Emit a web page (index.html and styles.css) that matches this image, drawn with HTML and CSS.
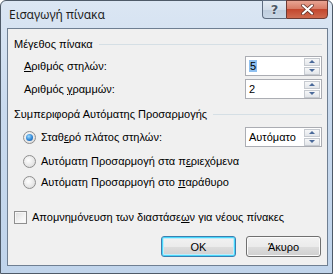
FILE: index.html
```html
<!DOCTYPE html>
<html lang="el">

<head>
    <meta charset="UTF-8">
    <title>Εισαγωγή πίνακα</title>
    <link rel="stylesheet" href="styles.css">
</head>

<body>
    <div class="window">
        <!-- Title bar -->
        <div class="titlebar">
            <span class="title">Εισαγωγή πίνακα</span>
            <div class="caption-btns">
                <div class="cap-btn help">?</div>
                <div class="cap-btn close">
                    <svg width="13" height="11" viewBox="0 0 13 11">
                        <path d="M2 1.5 L11 9.5 M11 1.5 L2 9.5" stroke="#5a2a22" stroke-width="3.6" stroke-linecap="round" />
                        <path d="M2 1.5 L11 9.5 M11 1.5 L2 9.5" stroke="#fff" stroke-width="2.2" stroke-linecap="round" />
                    </svg>
                </div>
            </div>
        </div>

        <!-- Dialog body -->
        <div class="client">
            <div class="group-head first">
                <span>Μέγεθος πίνακα</span>
                <span class="rule"></span>
            </div>

            <div class="row field first-field">
                <label class="field-label"><u>Α</u>ριθμός στηλών:</label>
                <div class="spin">
                    <span class="spin-value"><span class="selected">5</span></span>
                    <div class="spin-btns">
                        <div class="spin-btn"><span class="arrow up"></span></div>
                        <div class="spin-btn"><span class="arrow down"></span></div>
                    </div>
                </div>
            </div>

            <div class="row field second-field">
                <label class="field-label">Αριθμός <u>γ</u>ραμμών:</label>
                <div class="spin">
                    <span class="spin-value">2</span>
                    <div class="spin-btns">
                        <div class="spin-btn"><span class="arrow up"></span></div>
                        <div class="spin-btn"><span class="arrow down"></span></div>
                    </div>
                </div>
            </div>

            <div class="group-head second">
                <span>Συμπεριφορά Αυτόματης Προσαρμογής</span>
                <span class="rule"></span>
            </div>

            <div class="row field radio-first">
                <label class="option"><span class="radio checked"></span><span>Σταθ<u>ε</u>ρό πλάτος στηλών:</span></label>
                <div class="spin">
                    <span class="spin-value">Αυτόματο</span>
                    <div class="spin-btns">
                        <div class="spin-btn"><span class="arrow up"></span></div>
                        <div class="spin-btn"><span class="arrow down"></span></div>
                    </div>
                </div>
            </div>

            <div class="row option-row radio-second">
                <label class="option"><span class="radio"></span><span>Αυτόματη Προσαρμογή στα π<u>ε</u>ριεχόμενα</span></label>
            </div>

            <div class="row option-row radio-third">
                <label class="option"><span class="radio"></span><span>Αυτόματη Προσαρμογή στο <u>π</u>αράθυρο</span></label>
            </div>

            <div class="row check-row">
                <label class="option"><span class="checkbox"></span><span>Απομνημόνευση των διαστάσε<u>ω</u>ν για νέους πίνακες</span></label>
            </div>

            <div class="button-row">
                <button class="btn default">OK</button>
                <button class="btn">Άκυρο</button>
            </div>
        </div>
    </div>
</body>

</html>
```

FILE: styles.css
```css
* {
    margin: 0;
    padding: 0;
    box-sizing: border-box;
}

body {
    font-family: 'Liberation Sans', 'DejaVu Sans', sans-serif;
    font-size: 11px;
    color: #000;
    background-color: #fff;
}

.window {
    width: 333px;
    height: 274px;
    border: 1px solid #4e5a68;
    border-radius: 6px 6px 0 0;
    background: linear-gradient(to bottom, #dbe6f3 0%, #c9daee 40%, #c0d4eb 100%);
    padding: 0 4px 7px 6px;
    display: flex;
    flex-direction: column;
}

.titlebar {
    height: 27px;
    display: flex;
    align-items: flex-start;
    justify-content: space-between;
}

.title {
    font-family: 'Noto Sans', 'DejaVu Sans', sans-serif;
    font-size: 12px;
    color: #1e1e1e;
    margin: 6px 0 0 2px;
    line-height: 16px;
}

.caption-btns {
    display: flex;
    margin-top: -1px;
}

.cap-btn {
    height: 19px;
    border: 1px solid #5f6d80;
    display: flex;
    align-items: center;
    justify-content: center;
}

.help {
    width: 24px;
    border-radius: 0 0 0 4px;
    border-right: none;
    background: linear-gradient(to bottom, #e4ebf3 0%, #d3dde9 50%, #bfcddd 51%, #c9d7e6 100%);
    color: #4d5866;
    font-family: 'DejaVu Sans', sans-serif;
    font-weight: bold;
    font-size: 13px;
    text-shadow: 0 0 2px #fff;
}

.close {
    width: 42px;
    border-radius: 0 0 4px 0;
    background: linear-gradient(to bottom, #e8a493 0%, #d87c66 45%, #c3472e 50%, #cf6a4f 100%);
    border-color: #6c3a33;
}

.client {
    flex: 1;
    background-color: #f0f0f0;
    border: 1px solid #6f7f92;
    padding: 0 5px 0 6px;
    display: flex;
    flex-direction: column;
}

.group-head {
    display: flex;
    align-items: center;
    height: 14px;
    color: #000;
}

.group-head.first {
    margin-top: 8px;
}

.group-head.second {
    margin-top: 8px;
}

.rule {
    flex: 1;
    height: 1px;
    background-color: #d5dfe5;
    margin-left: 6px;
}

.row {
    display: flex;
    align-items: center;
}

.field {
    height: 20px;
    justify-content: space-between;
}

.first-field {
    margin-top: 5px;
}

.second-field {
    margin-top: 3px;
}

.field-label {
    margin-left: 10px;
}

.spin {
    width: 77px;
    height: 20px;
    border: 1px solid #abadb3;
    background-color: #fff;
    display: flex;
    align-items: center;
    justify-content: space-between;
    padding: 0 1px 0 3px;
}

.spin-value {
    line-height: 14px;
}

.selected {
    background-color: #8fc0f0;
    padding: 0 1px;
}

.spin-btns {
    display: flex;
    flex-direction: column;
    gap: 1px;
}

.spin-btn {
    width: 16px;
    height: 8px;
    border: 1px solid #c6cad0;
    background: linear-gradient(to bottom, #f6f7f8, #e3e6ea);
    display: flex;
    align-items: center;
    justify-content: center;
}

.arrow {
    width: 0;
    height: 0;
    border-left: 3px solid transparent;
    border-right: 3px solid transparent;
}

.arrow.up {
    border-bottom: 3px solid #4b6a9a;
}

.arrow.down {
    border-top: 3px solid #4b6a9a;
}

.radio-first {
    margin-top: 6px;
}

.option-row {
    height: 18px;
}

.radio-second {
    margin-top: 5px;
}

.radio-third {
    margin-top: 3px;
}

.option {
    display: flex;
    align-items: center;
}

.radio {
    width: 13px;
    height: 13px;
    border-radius: 50%;
    border: 1px solid #8f8f8f;
    background: radial-gradient(circle at 40% 40%, #ffffff 0%, #e6e6e6 60%, #cfcfcf 100%);
    margin: 0 5px 0 9px;
    display: flex;
    align-items: center;
    justify-content: center;
}

.radio.checked::after {
    content: "";
    width: 7px;
    height: 7px;
    border-radius: 50%;
    background: radial-gradient(circle at 40% 35%, #9fdcff 0%, #2f86d6 55%, #1a4f8f 100%);
}

.check-row {
    height: 18px;
    margin-top: 17px;
}

.checkbox {
    width: 13px;
    height: 13px;
    border: 1px solid #8f8f8f;
    background: linear-gradient(135deg, #dcdcdc 0%, #f4f4f4 60%, #ffffff 100%);
    box-shadow: inset 0 0 0 1px #f6f6f6;
    margin: 0 5px 0 0;
}

.button-row {
    display: flex;
    justify-content: flex-end;
    gap: 10px;
    margin-top: 10px;
    padding-right: 1px;
}

.btn {
    width: 75px;
    height: 21px;
    font-family: 'Liberation Sans', 'DejaVu Sans', sans-serif;
    font-size: 11px;
    color: #000;
    border: 1px solid #707070;
    border-radius: 3px;
    background: linear-gradient(to bottom, #f2f2f2 0%, #ebebeb 50%, #dddddd 51%, #cfcfcf 100%);
    box-shadow: inset 0 0 0 1px #fbfbfb;
}

.btn.default {
    border-color: #3c7fb1;
    box-shadow: inset 0 0 0 1px #48d8fb, inset 0 0 0 2px #c0ecfb;
}
```
